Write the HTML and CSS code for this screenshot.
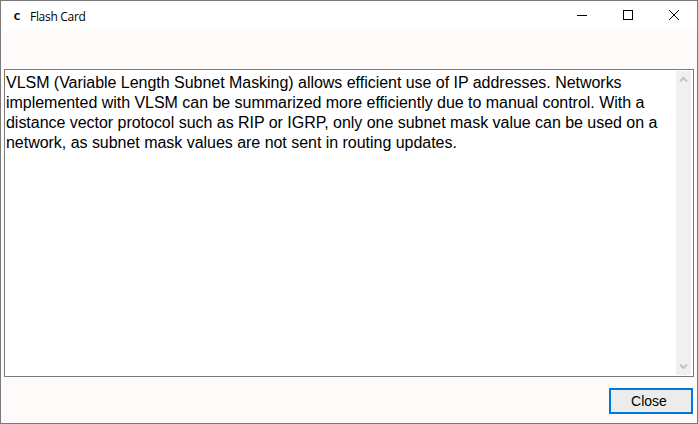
FILE: index.html
```html
<!DOCTYPE html>
<html>
  <head>
    <meta charset="utf-8">
    <title>Flash Card</title>
    <link rel="stylesheet" href="styles.css">
  </head>
  <body>
    <div class="window">
      <div class="titlebar">
        <span class="app-icon">C</span>
        <span class="title">Flash Card</span>
        <div class="controls">
          <div class="control">
            <svg width="12" height="12" viewBox="0 0 12 12"><path d="M1 6.5H11" stroke="#000" fill="none"/></svg>
          </div>
          <div class="control">
            <svg width="12" height="12" viewBox="0 0 12 12"><rect x="1.5" y="1.5" width="9" height="9" stroke="#000" fill="none"/></svg>
          </div>
          <div class="control">
            <svg width="12" height="12" viewBox="0 0 12 12"><path d="M1 1L11 11M11 1L1 11" stroke="#000" fill="none"/></svg>
          </div>
        </div>
      </div>
      <div class="content">
        <div class="textbox">
          <div class="text">VLSM (Variable Length Subnet Masking) allows efficient use of IP addresses. Networks<br>implemented with VLSM can be summarized more efficiently due to manual control. With a<br>distance vector protocol such as RIP or IGRP, only one subnet mask value can be used on a<br>network, as subnet mask values are not sent in routing updates.</div>
          <div class="scrollbar">
            <svg width="15" height="17" viewBox="0 0 15 17"><path d="M4 10.5L7.5 7L11 10.5" stroke="#c4c4c4" stroke-width="2" fill="none"/></svg>
            <svg width="15" height="17" viewBox="0 0 15 17"><path d="M4 6.5L7.5 10L11 6.5" stroke="#c4c4c4" stroke-width="2" fill="none"/></svg>
          </div>
        </div>
        <div class="footer">
          <button class="close-btn">Close</button>
        </div>
      </div>
    </div>
  </body>
</html>
```

FILE: styles.css
```css
html, body {
    margin: 0;
    padding: 0;
}
body {
    width: 698px;
    height: 424px;
    overflow: hidden;
    font-family: "Liberation Sans", Arial, sans-serif;
}
.window {
    box-sizing: border-box;
    width: 698px;
    height: 424px;
    border: 1px solid #7a7a7a;
    display: flex;
    flex-direction: column;
    background-color: #fffafa;
}
.titlebar {
    height: 30px;
    flex: none;
    display: flex;
    align-items: center;
    background-color: #fff;
}
.app-icon {
    width: 10px;
    margin-left: 11px;
    padding-top: 1px;
    font-family: "DejaVu Sans", sans-serif;
    font-size: 9px;
    font-weight: bold;
    text-align: center;
}
.title {
    margin-left: 8px;
    font-family: "Open Sans", sans-serif;
    font-size: 12px;
    letter-spacing: -0.3px;
    color: #000;
}
.controls {
    margin-left: auto;
    display: flex;
}
.control {
    width: 46px;
    height: 30px;
    display: flex;
    align-items: center;
    justify-content: center;
}
.control svg {
    margin-bottom: 2px;
}
.content {
    flex: 1;
    display: flex;
    flex-direction: column;
    padding: 38px 3px 9px 3px;
}
.textbox {
    box-sizing: border-box;
    height: 308px;
    flex: none;
    display: flex;
    border: 1px solid #7a7a7a;
    background-color: #fff;
}
.text {
    flex: 1;
    padding: 3px 0 0 1px;
    font-size: 16px;
    line-height: 20px;
    letter-spacing: -0.03px;
    color: #000;
    white-space: nowrap;
}
.scrollbar {
    width: 15px;
    flex: none;
    margin: 1px 2px 1px 0;
    display: flex;
    flex-direction: column;
    justify-content: space-between;
    background-color: #f0f0f0;
}
.footer {
    margin-top: 11px;
    padding-right: 1px;
    display: flex;
    justify-content: flex-end;
}
.close-btn {
    box-sizing: border-box;
    width: 84px;
    height: 26px;
    padding: 0 4px 0 0;
    border: 2px solid #0078d7;
    background-color: #ececec;
    font-family: "Liberation Sans", Arial, sans-serif;
    font-size: 14px;
    color: #000;
}
```
